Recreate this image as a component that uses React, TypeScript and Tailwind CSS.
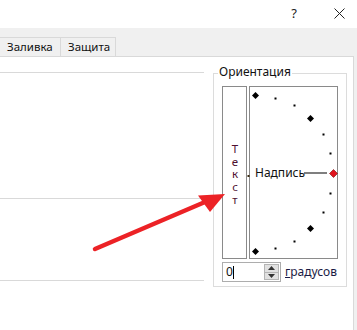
import React from "react";

const R = 78;
const CX = 6;
const CY = 87;

function Dial() {
  const items: React.ReactNode[] = [];
  for (let a = 90; a >= -90; a -= 15) {
    const rad = (a * Math.PI) / 180;
    const x = Math.round(CX + R * Math.cos(rad));
    const y = Math.round(CY - R * Math.sin(rad));
    const big = a % 45 === 0;
    if (big) {
      const h = a === 0 ? 4 : 3.5;
      items.push(
        <polygon
          key={a}
          points={`${x + 0.5},${y + 0.5 - h} ${x + 0.5 + h},${y + 0.5} ${x + 0.5},${y + 0.5 + h} ${x + 0.5 - h},${y + 0.5}`}
          fill={a === 0 ? "#e0141e" : "#000"}
          stroke={a === 0 ? "#7a0a0a" : "none"}
          strokeWidth={a === 0 ? 0.6 : 0}
        />
      );
    } else {
      items.push(<rect key={a} x={x - 0.5} y={y - 0.5} width={2} height={2} fill="#000" />);
    }
  }
  return (
    <svg
      className="absolute left-[-1px] top-[-1px] overflow-visible"
      width={89}
      height={173}
      viewBox="0 0 89 173"
    >
      <rect x={55} y={86.5} width={23} height={1} fill="#000" />
      <rect x={-1.5} y={89} width={2} height={2} fill="#3a2a10" />
      {items}
    </svg>
  );
}

export default function App() {
  return (
    <div className="relative w-[357px] h-[330px] overflow-hidden bg-white font-['Noto_Sans','Open_Sans',sans-serif] text-[12px] text-black">
      {/* title bar */}
      <div className="h-[28px] flex items-center justify-end pr-[12px]">
        <span className="text-[13px] leading-none text-[#222] mr-[37px] mt-[-2px]">?</span>
        <svg width="11" height="11" viewBox="0 0 11 11" className="mt-[-2px]">
          <path d="M0.5 0.5 L10.5 10.5 M10.5 0.5 L0.5 10.5" stroke="#222" strokeWidth="1" fill="none" />
        </svg>
      </div>

      <div className="bg-[#f0f0f0] h-[302px] flex flex-col">
        <div className="h-[9px]" />
        {/* tabs */}
        <div className="flex h-[19px] ml-[-1px]">
          <div className="w-[62px] border-t border-r border-[#d9d9d9] pl-[8px] leading-[18px] text-[11.5px] text-[#111]">
            Заливка
          </div>
          <div className="w-[55px] border-t border-r border-[#d9d9d9] pl-[7px] leading-[18px] text-[11.5px] text-[#111]">
            Защита
          </div>
        </div>

        {/* panel */}
        <div className="flex-1 w-[354px] bg-white border-t border-r border-[#d9d9d9] flex">
          <div className="w-[204px] flex flex-col">
            <div className="mt-[15px] h-[126px] border-t border-[#d9d9d9]" />
            <div className="h-[82px] border-t border-[#d9d9d9]" />
            <div className="border-t border-[#d9d9d9]" />
          </div>

          <div className="ml-[9px] mt-[16px] w-[134px] h-[214px] border border-[#dcdcdc] relative pl-[8px] pt-[12px]">
            <span className="absolute left-[4px] top-[-9px] px-[1px] bg-white leading-[14px] text-[#111]">
              Ориентация
            </span>

            <div className="flex gap-[2px]">
              <div className="w-[25px] h-[173px] border border-[#8a8a8a] flex items-center justify-center pt-[1px] text-[#4e1030] text-[11.5px]">
                <span className="[writing-mode:vertical-lr] [text-orientation:upright] tracking-[-2.3px] leading-[12px]">
                  Текст
                </span>
              </div>
              <div className="relative w-[89px] h-[173px] border border-[#8a8a8a]">
                <Dial />
                <span className="absolute left-[5px] top-[79px] leading-[14px] text-[#111]">Надпись</span>
              </div>
            </div>

            <div className="flex items-center mt-[3px]">
              <div className="flex w-[59px] h-[20px] border border-[#adadad] bg-white">
                <div className="flex-1 flex items-center pl-[3px] leading-none text-[#111]">
                  <span>0</span>
                  <span className="w-[1px] h-[13px] bg-black" />
                </div>
                <div className="w-[17px] flex flex-col p-[1px]">
                  <div className="flex-1 bg-[#e1e1e1] border border-[#b5b5b5] flex items-center justify-center">
                    <svg width="7" height="4" viewBox="0 0 7 4">
                      <path d="M0 4 L3.5 0 L7 4 Z" fill="#333" />
                    </svg>
                  </div>
                  <div className="flex-1 bg-[#e1e1e1] border border-[#b5b5b5] border-t-0 flex items-center justify-center">
                    <svg width="7" height="4" viewBox="0 0 7 4">
                      <path d="M0 0 L3.5 4 L7 0 Z" fill="#333" />
                    </svg>
                  </div>
                </div>
              </div>
              <span className="ml-[4px] text-[#1a1a44] leading-[14px]">
                <span className="underline">г</span>радусов
              </span>
            </div>
          </div>
        </div>
      </div>

      {/* red arrow */}
      <svg className="absolute left-0 top-0 pointer-events-none" width={357} height={330} viewBox="0 0 357 330">
        <line x1={95} y1={249} x2={212} y2={199} stroke="#ec2226" strokeWidth={4.5} strokeLinecap="round" />
        <polygon points="225,194 198,195.5 210,212" fill="#ec2226" />
      </svg>
    </div>
  );
}
